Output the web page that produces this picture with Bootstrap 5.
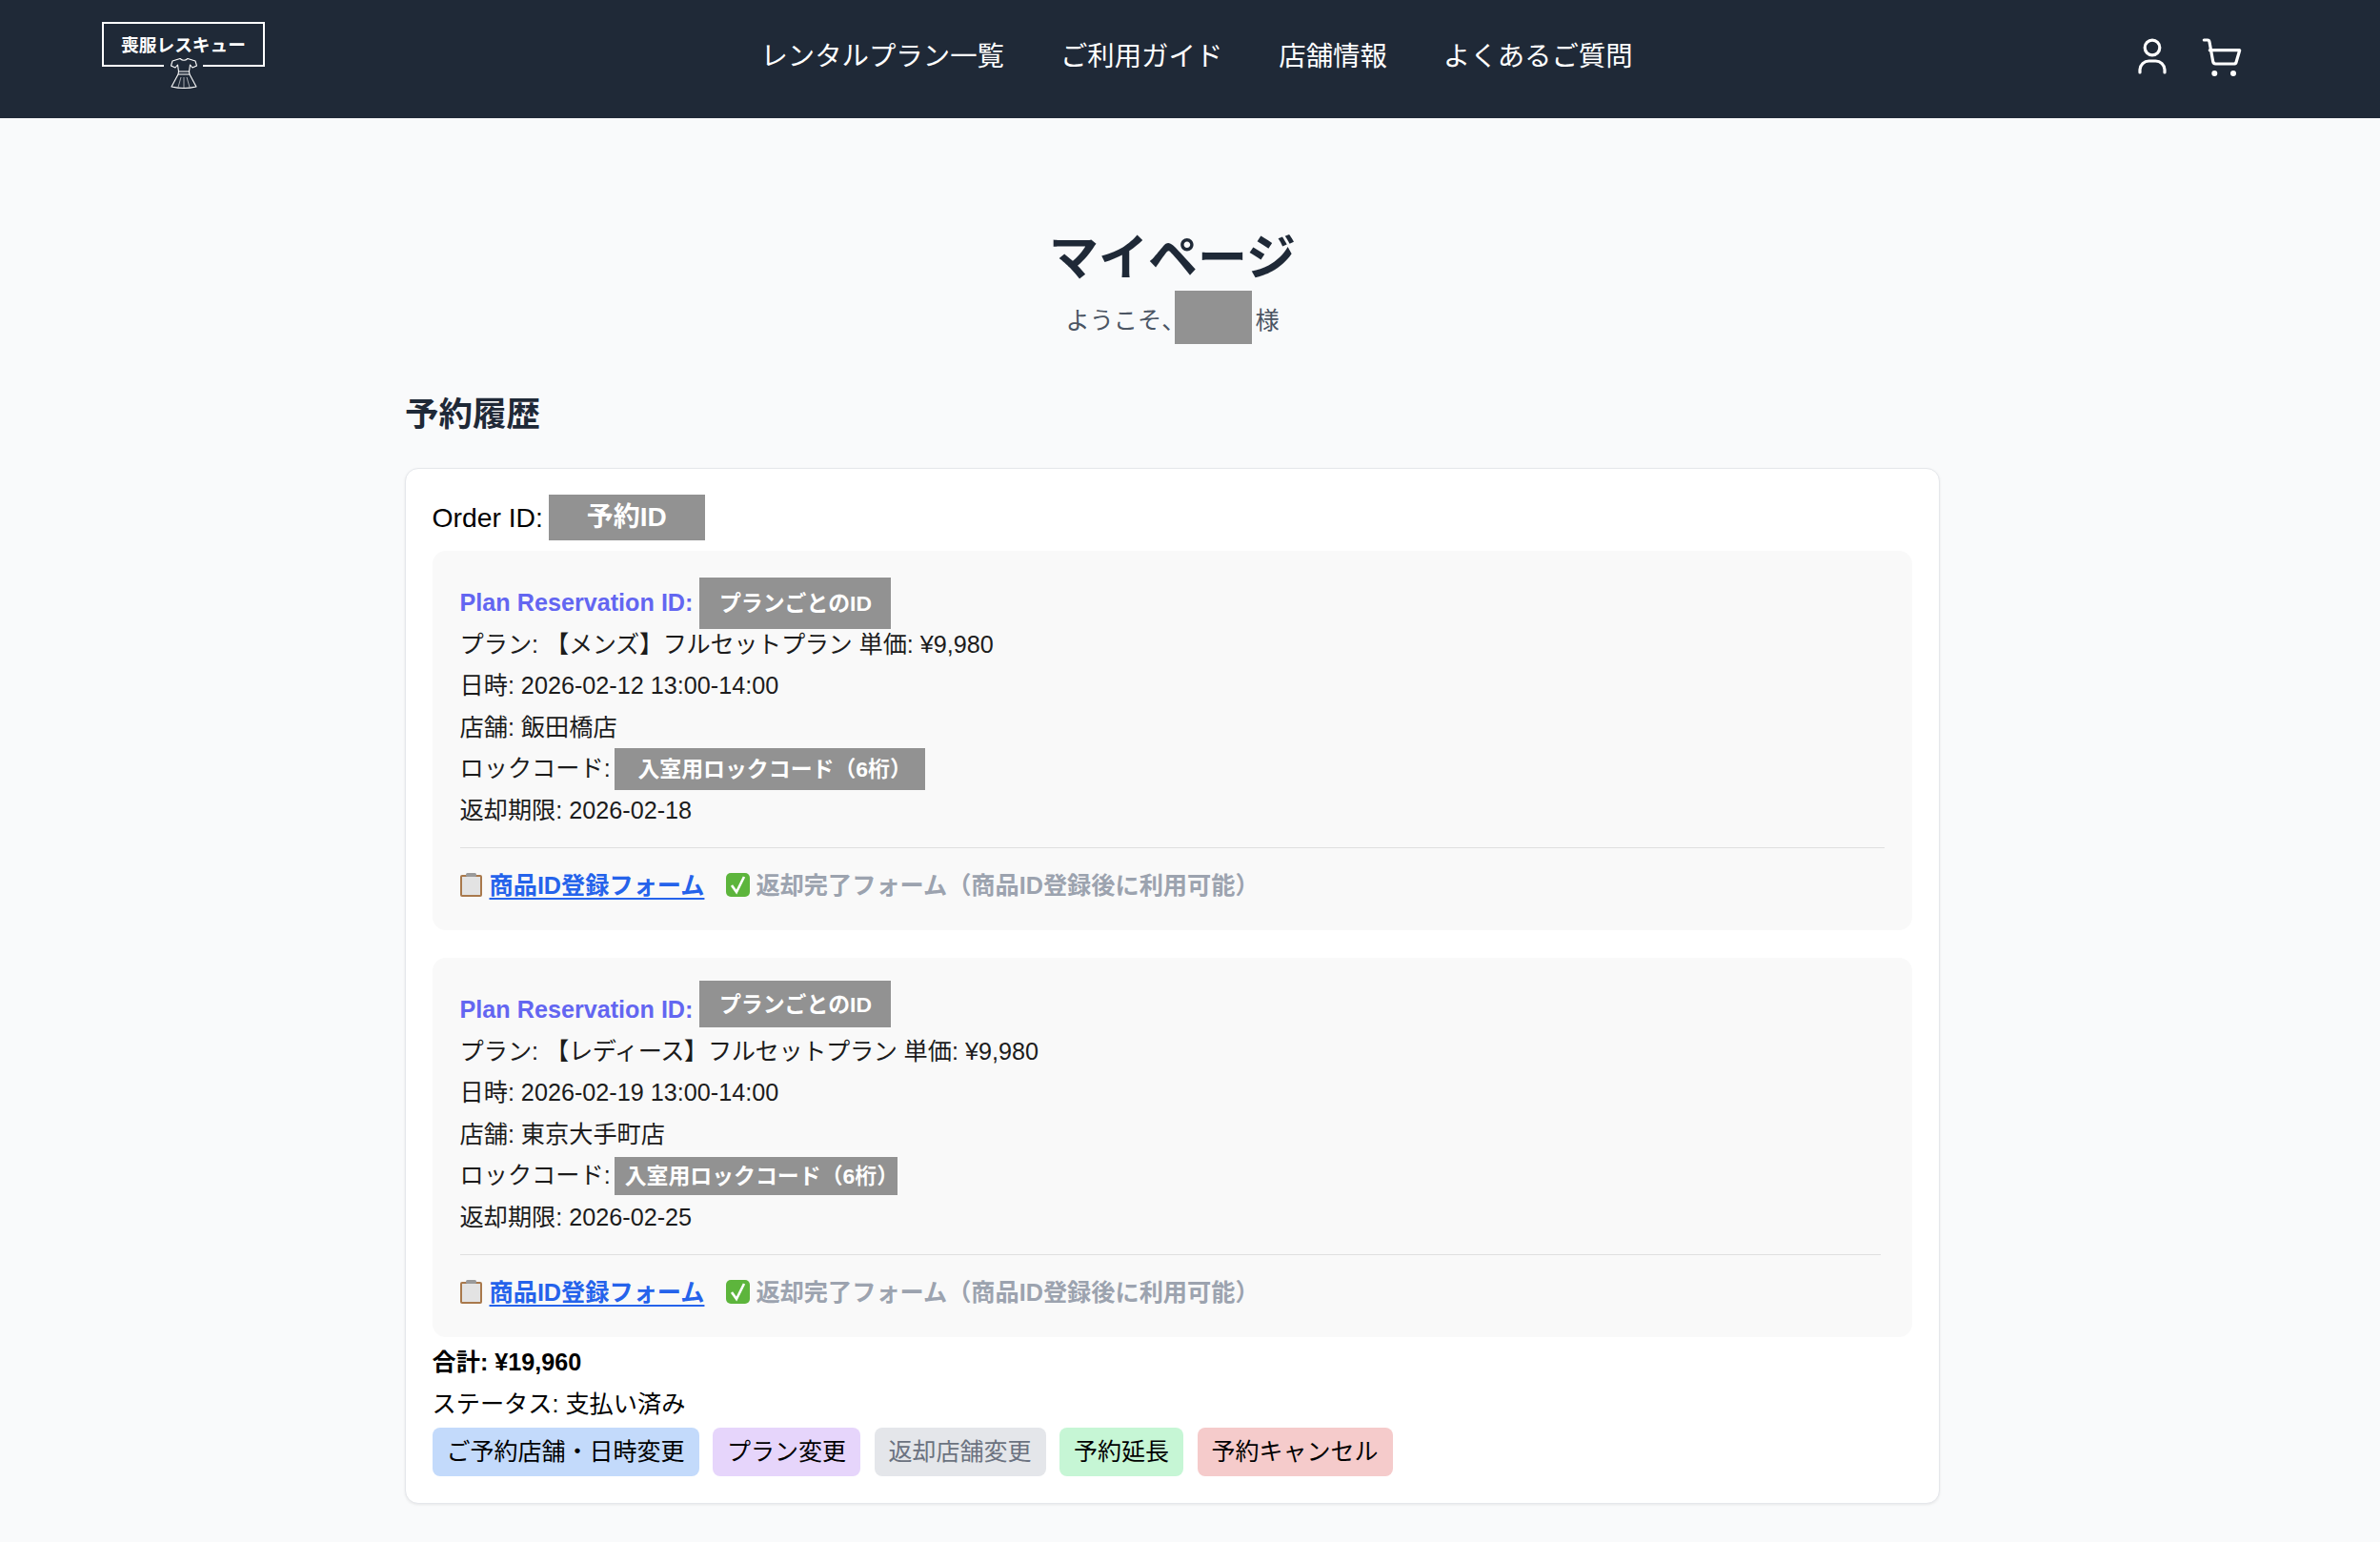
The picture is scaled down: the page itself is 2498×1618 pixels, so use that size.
<!DOCTYPE html>
<html lang="ja">
<head>
  <meta charset="UTF-8" />
  <meta name="viewport" content="width=device-width, initial-scale=1" />
  <title>マイページ</title>
  <link href="https://cdn.jsdelivr.net/npm/bootstrap@5.3.0/dist/css/bootstrap.min.css" rel="stylesheet" />
  <style>
    body { background: #f9fafb; color: #000; font-family: "Liberation Sans", "Noto Sans CJK JP", sans-serif; font-size: 25.2px; min-height: 1618px; }

    .site-header { background: #1f2937; height: 124px; padding: 0 144px 5px 107px; }
    .logo-box { position: relative; width: 171px; height: 47px; margin-top: -26px; padding-top: 3px; border: 2px solid #fff; color: #fff; font-size: 18.7px; font-weight: 700; line-height: 1; }
    .logo-dress { position: absolute; left: 63px; top: 35px; width: 41px; height: 36px; background: #1f2937; text-align: center; }
    .head-links { gap: 59px; }
    .head-links a { color: #fff; font-size: 28.4px; padding: 0; text-decoration: none; }
    .head-icons { gap: 34px; padding-left: 8px; }

    .page-wrap { width: 1611px; margin-left: 425px; padding-top: 115px; }
    .page-title { color: #1f2937; font-size: 52px; font-weight: 700; height: 64px; line-height: 64px; margin: 0; }
    .welcome { color: #4b5563; height: 40px; margin-top: 14px; }
    .mask-name { width: 81px; height: 56px; margin-left: -11px; margin-right: 3px; margin-bottom: 8px; }
    .section-title { color: #1f2937; font-size: 35.5px; font-weight: 700; height: 50px; line-height: 50px; margin: 53px 0 31px; }

    .order-card { background: #fff; border: 1px solid #e5e7eb; border-radius: 14px; box-shadow: 0 1px 3px rgba(0,0,0,.08); padding: 29.5px 28.5px 28px 27.5px; }
    .info-line { display: flex; align-items: center; height: 43.5px; color: #1c1c1c; }
    .order-line { font-size: 28.3px; color: #000; margin-bottom: 13px; }
    .mask-box { display: flex; align-items: center; justify-content: center; flex-shrink: 0; background: #929292; color: #fff; font-size: 22.9px; font-weight: 700; }
    .mask-order { width: 164px; height: 48px; margin-left: 6px; font-size: 28px; }
    .mask-plan { width: 201px; height: 54px; margin-left: 7px; }
    .mask-plan-up { height: 49px; margin-bottom: 13px; }
    .mask-lock { width: 326px; height: 44px; margin-left: 4px; padding-left: 11px; }
    .mask-lock-sm { width: 297px; height: 40px; }

    .plan-box { background: #f9f9f9; border-radius: 14px; height: 398px; padding: 30.5px 29px 0; margin-bottom: 29px; }
    .plan-box-last { margin-bottom: 5.5px; }
    .plan-id { color: #6366f1; font-weight: 700; }
    .plan-name { letter-spacing: -.35px; }
    .first-line { margin-top: 3px; }
    .plan-rule { border-top: 1px solid #000; opacity: .1; margin: 16.5px 0 18.5px; }
    .form-link { color: #2563eb; font-weight: 700; text-decoration-thickness: 2px; text-underline-offset: 4px; }
    .form-off { color: #9ca3af; font-weight: 700; margin-left: 16px; }
    .emoji-svg { width: 25px; height: 25px; vertical-align: -3px; margin-right: 6px; }

    .total-line { font-weight: 700; color: #000; }
    .status-line { color: #000; }
    .action-row { gap: 14.5px; margin-top: 2px; }
    .action-btn { border: 0; border-radius: 8px; color: #000; font-size: 25px; height: 51px; line-height: 51px; padding: 0 15px; white-space: nowrap; }
    .act-blue { background: #c3dafb; }
    .act-purple { background: #e6d5fb; }
    .act-gray { background: #e4e6ea; color: #6b7280; }
    .act-green { background: #c6f6d5; }
    .act-red { background: #f5cbcb; }
  </style>
</head>
<body>

  <header class="site-header d-flex align-items-center justify-content-between">
    <a href="#" class="logo-box d-flex align-items-center justify-content-center text-decoration-none">
      <span>喪服レスキュー</span>
      <span class="logo-dress">
        <svg width="28" height="34" viewBox="0 0 28 34" fill="none" stroke="#fff" stroke-width="1.1" stroke-linejoin="round">
          <path d="M10 1.5 Q14 5 18 1.5 L26 4 L27.5 9 L23 11 L20.5 8 L19.5 15 H8.5 L7.5 8 L5 11 L.5 9 L2 4 Z"/>
          <path d="M8.5 15 L8 18 H20 L19.5 15"/>
          <path d="M8 18 L1 31 Q14 34 27 31 L20 18"/>
          <path d="M11 21 L8 31.5 M17 21 L20 31.5 M14 21 V32.5" stroke-width=".6"/>
        </svg>
      </span>
    </a>

    <nav class="head-links nav">
      <a href="#">レンタルプラン一覧</a>
      <a href="#">ご利用ガイド</a>
      <a href="#">店舗情報</a>
      <a href="#">よくあるご質問</a>
    </nav>

    <div class="head-icons d-flex align-items-center">
      <svg width="34" height="44" viewBox="0 0 34 44" fill="none" stroke="#fff" stroke-width="3.2" stroke-linecap="round">
        <circle cx="17" cy="12" r="7.8"/>
        <path d="M4 38 V35 A9.5 9.5 0 0 1 13.5 26 H20.5 A9.5 9.5 0 0 1 30 35 V38"/>
      </svg>
      <svg width="44" height="44" viewBox="0 0 44 44" fill="none" stroke="#fff" stroke-width="3.2" stroke-linecap="round" stroke-linejoin="round">
        <path d="M3.3 4 H7 Q8.6 4 9 6 L12.6 26 Q13 29 15.5 29 H34.5 Q36.6 29 37 27.5 L40.7 14.7 H9.3"/>
        <circle cx="14.3" cy="39" r="3" fill="#fff" stroke="none"/>
        <circle cx="34" cy="39" r="3" fill="#fff" stroke="none"/>
      </svg>
    </div>
  </header>

  <main class="page-wrap">
    <h1 class="page-title text-center">マイページ</h1>
    <div class="welcome d-flex align-items-center justify-content-center">
      <span>ようこそ、</span>
      <span class="mask-box mask-name"></span>
      <span>様</span>
    </div>

    <h2 class="section-title">予約履歴</h2>

    <section class="order-card">
      <div class="info-line order-line">Order ID:<span class="mask-box mask-order">予約ID</span></div>

      <div class="plan-box">
        <div class="info-line first-line"><span class="plan-id">Plan Reservation ID:</span><span class="mask-box mask-plan">プランごとのID</span></div>
        <div class="info-line"><span>プラン: <span class="plan-name">【メンズ】フルセットプラン</span> 単価: ¥9,980</span></div>
        <div class="info-line">日時: 2026-02-12 13:00-14:00</div>
        <div class="info-line">店舗: 飯田橋店</div>
        <div class="info-line">ロックコード:<span class="mask-box mask-lock">入室用ロックコード（6桁）</span></div>
        <div class="info-line">返却期限: 2026-02-18</div>
        <hr class="plan-rule" />
        <div class="info-line">
          <span>
            <a href="#" class="form-link"><svg class="emoji-svg" viewBox="0 0 25 25"><rect x="0" y="2" width="23" height="23" rx="2" fill="#a9794c"/><rect x="2" y="4" width="19" height="19" fill="#e3e3e3"/><rect x="6" y="0" width="11" height="4" rx="1.5" fill="#9a9a9a"/></svg>商品ID登録フォーム</a>
            <span class="form-off"><svg class="emoji-svg" viewBox="0 0 25 25"><rect x="0" y="0" width="25" height="25" rx="5" fill="#5db53c"/><path d="M6 13 L11 20 L19 4" fill="none" stroke="#fff" stroke-width="2.6"/></svg>返却完了フォーム（商品ID登録後に利用可能）</span>
          </span>
        </div>
      </div>

      <div class="plan-box plan-box-last">
        <div class="info-line first-line"><span class="plan-id">Plan Reservation ID:</span><span class="mask-box mask-plan mask-plan-up">プランごとのID</span></div>
        <div class="info-line"><span>プラン: <span class="plan-name">【レディース】フルセットプラン</span> 単価: ¥9,980</span></div>
        <div class="info-line">日時: 2026-02-19 13:00-14:00</div>
        <div class="info-line">店舗: 東京大手町店</div>
        <div class="info-line">ロックコード:<span class="mask-box mask-lock mask-lock-sm">入室用ロックコード（6桁）</span></div>
        <div class="info-line">返却期限: 2026-02-25</div>
        <hr class="plan-rule me-1" />
        <div class="info-line">
          <span>
            <a href="#" class="form-link"><svg class="emoji-svg" viewBox="0 0 25 25"><rect x="0" y="2" width="23" height="23" rx="2" fill="#a9794c"/><rect x="2" y="4" width="19" height="19" fill="#e3e3e3"/><rect x="6" y="0" width="11" height="4" rx="1.5" fill="#9a9a9a"/></svg>商品ID登録フォーム</a>
            <span class="form-off"><svg class="emoji-svg" viewBox="0 0 25 25"><rect x="0" y="0" width="25" height="25" rx="5" fill="#5db53c"/><path d="M6 13 L11 20 L19 4" fill="none" stroke="#fff" stroke-width="2.6"/></svg>返却完了フォーム（商品ID登録後に利用可能）</span>
          </span>
        </div>
      </div>

      <div class="info-line total-line">合計: ¥19,960</div>
      <div class="info-line status-line">ステータス: 支払い済み</div>
      <div class="action-row d-flex">
        <button type="button" class="btn action-btn act-blue">ご予約店舗・日時変更</button>
        <button type="button" class="btn action-btn act-purple">プラン変更</button>
        <button type="button" class="btn action-btn act-gray">返却店舗変更</button>
        <button type="button" class="btn action-btn act-green">予約延長</button>
        <button type="button" class="btn action-btn act-red">予約キャンセル</button>
      </div>
    </section>
  </main>

  <script src="https://cdn.jsdelivr.net/npm/bootstrap@5.3.0/dist/js/bootstrap.bundle.min.js"></script>
</body>
</html>
